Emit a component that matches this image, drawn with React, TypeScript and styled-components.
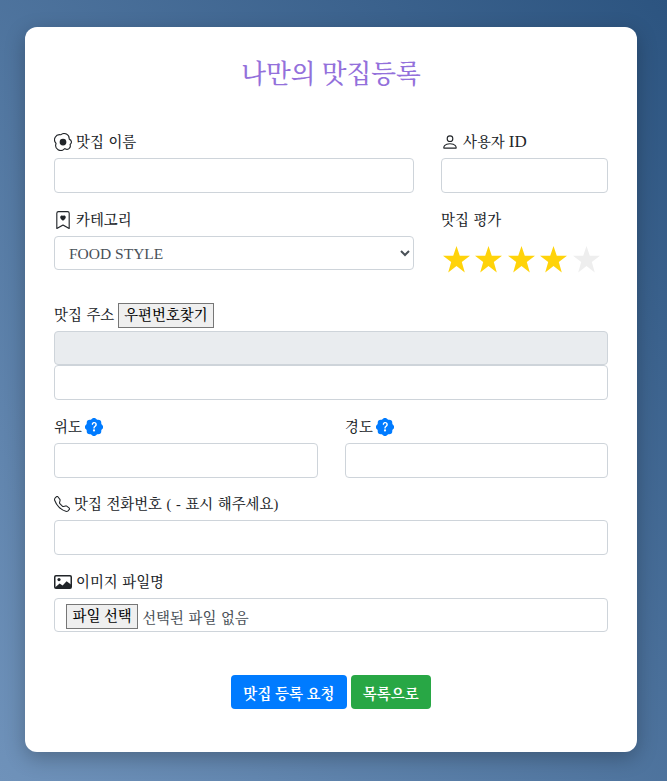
import styled, { createGlobalStyle } from 'styled-components';
import {
  BsBookmarkHeart,
  BsEggFried,
  BsFillPatchQuestionFill,
  BsPerson,
  BsTelephone,
} from 'react-icons/bs';

const GlobalStyle = createGlobalStyle`
  html, body {
    margin: 0;
    height: 100%;
  }
  body {
    background: linear-gradient(to top right, #6f92ba, #2c5480);
    font-family: "Liberation Serif", "Noto Serif CJK KR", "Noto Sans CJK KR", serif;
    color: #212529;
    overflow: hidden;
  }
`;

const Page = styled.div`
  width: 667px;
  height: 781px;
  padding: 27px 30px 0 25px;
  box-sizing: border-box;
`;

const Card = styled.form`
  height: 725px;
  box-sizing: border-box;
  padding: 31px 29px 0;
  background: #fff;
  border-radius: 12px;
  box-shadow: 0 6px 20px rgba(0, 0, 0, 0.25);
`;

const Title = styled.h2`
  margin: 0 0 38px;
  text-align: center;
  font-size: 25.6px;
  font-weight: 500;
  line-height: 34px;
  color: #9370db;
`;

const Row = styled.div<{ $columns: string; $gap: number; $bottom?: number }>`
  display: grid;
  grid-template-columns: ${({ $columns }) => $columns};
  column-gap: ${({ $gap }) => $gap}px;
  margin-bottom: ${({ $bottom = 0 }) => $bottom}px;
`;

const Field = styled.div<{ $bottom?: number }>`
  margin-bottom: ${({ $bottom = 15 }) => $bottom}px;
`;

const Label = styled.label<{ $gap?: number }>`
  display: flex;
  align-items: center;
  gap: ${({ $gap = 4 }) => $gap}px;
  height: 24px;
  margin-bottom: 4px;
  font-size: 14.4px;
  font-weight: 500;
  word-spacing: 1px;
  line-height: 24px;
  white-space: nowrap;

  svg {
    flex: none;
  }
`;

const Latin = styled.span`
  font-size: 17px;
`;

const Input = styled.input<{ $height?: number }>`
  display: block;
  width: 100%;
  height: ${({ $height = 35 }) => $height}px;
  box-sizing: border-box;
  padding: 6px 12px;
  border: 1px solid #ced4da;
  border-radius: 4px;
  background: ${({ disabled }) => (disabled ? '#e9ecef' : '#fff')};
  font: inherit;
  outline: none;
`;

const Select = styled.select`
  display: block;
  width: 100%;
  height: 34px;
  box-sizing: border-box;
  padding: 4px 10px;
  border: 1px solid #ced4da;
  border-radius: 4px;
  background: #fff;
  color: #495057;
  font-family: inherit;
  font-size: 15.5px;
`;

const Stars = styled.div`
  display: flex;
  margin: 7px 0 0 2px;
  height: 40px;
  align-items: center;
`;

const Star = styled.svg<{ $on: boolean }>`
  display: block;
  width: 32.4px;
  height: 27px;
  fill: ${({ $on }) => ($on ? '#ffd30a' : '#eeeeee')};
`;

const NativeButton = styled.button<{ $padding: number }>`
  height: 25px;
  box-sizing: border-box;
  padding: 0 ${({ $padding }) => $padding}px;
  border: 1px solid #767676;
  border-radius: 0;
  background: #efefef;
  color: #000;
  font-family: inherit;
  font-size: 14.4px;
  font-weight: 500;
  line-height: 21px;
  white-space: nowrap;
`;

const FileBox = styled.div`
  display: flex;
  align-items: center;
  gap: 4px;
  height: 34px;
  box-sizing: border-box;
  padding: 3px 11px 0;
  border: 1px solid #ced4da;
  border-radius: 4px;
  font-size: 14.4px;
  font-weight: 500;
  word-spacing: 1px;
  color: #495057;
`;

const Help = styled(BsFillPatchQuestionFill)`
  color: #007bff;
`;

const Actions = styled.div`
  display: flex;
  justify-content: center;
  gap: 4px;
  margin-top: 43px;
`;

const ActionButton = styled.button<{ $tone: string }>`
  height: 34px;
  padding: 0 12px;
  border: 0;
  border-radius: 4px;
  background: ${({ $tone }) => $tone};
  color: #fff;
  font-family: inherit;
  font-size: 14.5px;
  font-weight: 700;
`;

const PictureIcon = () => (
  <svg width="18" height="14" viewBox="0 0 18 14" fill="#212529">
    <rect x="0.75" y="0.75" width="16.5" height="12.5" rx="1.2" fill="none" stroke="#212529" strokeWidth="1.5" />
    <circle cx="5" cy="4.6" r="1.6" />
    <path d="M1 12.5 5.6 8.4 8.6 10.4 12.6 6.2 17 9.6V13H1Z" />
  </svg>
);

const App = () => {
  return (
    <Page>
      <GlobalStyle />
      <Card>
        <Title>나만의 맛집등록</Title>
        <Row $columns="360px 167px" $gap={27}>
          <Field>
            <Label><BsEggFried size={18} />맛집 이름</Label>
            <Input />
          </Field>
          <Field>
            <Label><BsPerson size={18} />사용자 <Latin>ID</Latin></Label>
            <Input />
          </Field>
        </Row>
        <Row $columns="360px 167px" $gap={27} $bottom={24}>
          <Field $bottom={0}>
            <Label><BsBookmarkHeart size={18} />카테고리</Label>
            <Select defaultValue="FOOD STYLE">
              <option>FOOD STYLE</option>
            </Select>
          </Field>
          <Field $bottom={0}>
            <Label>맛집 평가</Label>
            <Stars>
              {[0, 1, 2, 3, 4].map((i) => (
                <Star key={i} $on={i < 4} viewBox="0 0 32.4 28" preserveAspectRatio="xMinYMid meet">
                  <polygon points="14,0 17.4,10 28,10 19.5,16.6 22.6,27.5 14,20.8 5.4,27.5 8.5,16.6 0,10 10.6,10" />
                </Star>
              ))}
            </Stars>
          </Field>
        </Row>
        <Field>
          <Label>맛집 주소<NativeButton type="button" $padding={5}>우편번호찾기</NativeButton></Label>
          <Input disabled $height={34} />
          <Input />
        </Field>
        <Row $columns="264px 263px" $gap={27}>
          <Field $bottom={14}>
            <Label $gap={3}>위도<Help size={18} /></Label>
            <Input />
          </Field>
          <Field $bottom={14}>
            <Label $gap={3}>경도<Help size={18} /></Label>
            <Input />
          </Field>
        </Row>
        <Field>
          <Label><BsTelephone size={16} />맛집 전화번호 ( - 표시 해주세요)</Label>
          <Input />
        </Field>
        <Field $bottom={0}>
          <Label><PictureIcon />이미지 파일명</Label>
          <FileBox>
            <NativeButton type="button" $padding={5.5}>파일 선택</NativeButton>
            선택된 파일 없음
          </FileBox>
        </Field>
        <Actions>
          <ActionButton type="button" $tone="#007bff">맛집 등록 요청</ActionButton>
          <ActionButton type="button" $tone="#28a745">목록으로</ActionButton>
        </Actions>
      </Card>
    </Page>
  );
};

export default App;
